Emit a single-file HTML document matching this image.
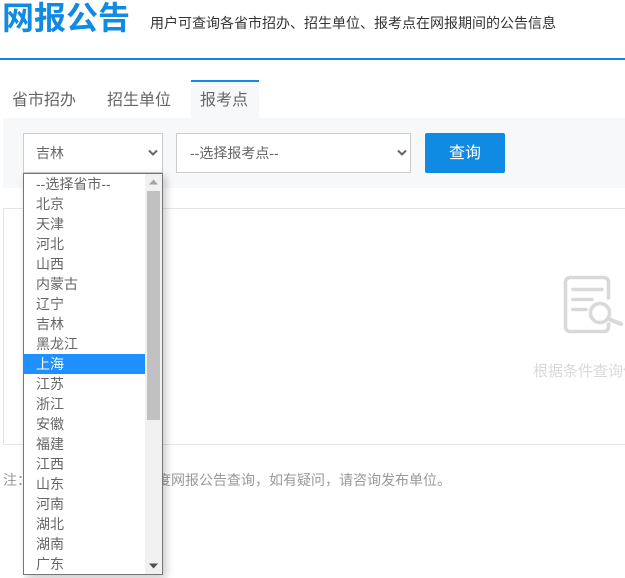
<!DOCTYPE html>
<html lang="zh">
<head>
<meta charset="utf-8">
<title>网报公告</title>
<style>
html,body{margin:0;padding:0;background:#fff}
body{width:625px;height:578px;position:relative;overflow:hidden;font-family:"Liberation Sans","Noto Sans CJK SC",sans-serif;color:#333}
.a{position:absolute;white-space:nowrap}
.sel{position:absolute;top:133px;height:38px;background:#fff;border:1px solid #ccc;font-size:14px;line-height:39px;color:#666;box-sizing:content-box}
.chev{position:absolute;top:15px}
#dd{position:absolute;left:23px;top:173px;width:138px;height:400px;border:1px solid #767676;background:#fff;box-shadow:3px 3px 8px rgba(0,0,0,.22);overflow:hidden}
#dd div.o{height:20px;line-height:20px;font-size:14px;color:#666;padding-left:12px;width:109px}
#dd div.h{background:#1e90ff;color:#fff}
#sb{position:absolute;left:121px;top:0;width:17px;height:400px;background:#f1f1f1}
#th{position:absolute;left:2px;top:17px;width:13px;height:229px;background:#c1c1c1}
</style>
</head>
<body>
<div class="a" style="left:2px;top:-5px;font-size:32px;line-height:46px;font-weight:bold;color:#108ae3">网报公告</div>
<div class="a" style="left:150px;top:13px;font-size:14px;line-height:20px;color:#333">用户可查询各省市招办、招生单位、报考点在网报期间的公告信息</div>
<div class="a" style="left:0;top:58px;width:625px;height:2px;background:#108ae3"></div>

<div class="a" style="left:12px;top:89px;font-size:16px;line-height:24px;color:#666">省市招办</div>
<div class="a" style="left:107px;top:89px;font-size:16px;line-height:24px;color:#666">招生单位</div>
<div class="a" style="left:191px;top:80px;width:68px;height:38px;background:#f7f8fa;border-top:2px solid #108ae3;box-sizing:border-box"></div>
<div class="a" style="left:200px;top:89px;font-size:16px;line-height:24px;color:#666">报考点</div>

<div class="a" style="left:3px;top:118px;width:622px;height:70px;background:#f7f8fa"></div>

<div class="sel" style="left:23px;width:138px"><span style="position:absolute;left:12px">吉林</span>
<svg class="chev" style="left:123px" width="12" height="8" viewBox="0 0 12 8"><path d="M2 1.500 6 5.500 10 1.500" fill="none" stroke="#666" stroke-width="2"/></svg></div>
<div class="sel" style="left:176px;width:233px"><span style="position:absolute;left:13px">--选择报考点--</span>
<svg class="chev" style="left:219px" width="12" height="8" viewBox="0 0 12 8"><path d="M2 1.500 6 5.500 10 1.500" fill="none" stroke="#666" stroke-width="2"/></svg></div>
<div class="a" style="left:425px;top:133px;width:80px;height:40px;background:#108ae3;border-radius:2px;color:#fff;font-size:16px;line-height:41px;text-align:center">查询</div>

<div class="a" style="left:3px;top:208px;width:640px;height:237px;border:1px solid #e5e5e5;box-sizing:border-box"></div>

<svg class="a" style="left:555px;top:270px" width="70" height="70" viewBox="0 0 70 70" fill="none" stroke="#d9d9d9" stroke-width="3.6" stroke-linecap="round">
<path d="M53.500 28V12a4.500 4.500 0 0 0-4.500-4.500H15A4.500 4.500 0 0 0 10.500 12v45a4.500 4.500 0 0 0 4.500 4.500H49a4.500 4.500 0 0 0 4.500-4.500v-3"/>
<path d="M18 19.500H47M18 29.500H37M18 39.500H31"/>
<circle cx="45" cy="43" r="9.500"/>
<path d="M55 49.500 66 54" stroke-width="4"/>
</svg>
<div class="a" style="left:533px;top:361px;font-size:15px;line-height:21px;color:#d9d9d9">根据条件查询信息</div>

<div class="a" style="left:3px;top:470px;font-size:14px;line-height:20px;color:#999">注：</div>
<div class="a" style="left:157px;top:470px;font-size:14px;line-height:20px;color:#999">度网报公告查询，如有疑问，请咨询发布单位。</div>

<div id="dd">
<div class="o">--选择省市--</div>
<div class="o">北京</div>
<div class="o">天津</div>
<div class="o">河北</div>
<div class="o">山西</div>
<div class="o">内蒙古</div>
<div class="o">辽宁</div>
<div class="o">吉林</div>
<div class="o">黑龙江</div>
<div class="o h">上海</div>
<div class="o">江苏</div>
<div class="o">浙江</div>
<div class="o">安徽</div>
<div class="o">福建</div>
<div class="o">江西</div>
<div class="o">山东</div>
<div class="o">河南</div>
<div class="o">湖北</div>
<div class="o">湖南</div>
<div class="o">广东</div>
<div id="sb">
<div id="th"></div>
<svg style="position:absolute;left:3px;top:5px" width="11" height="6" viewBox="0 0 11 6"><path d="M5.500 .5 10 5.500H1Z" fill="#a3a3a3"/></svg>
<svg style="position:absolute;left:3px;top:389px" width="11" height="6" viewBox="0 0 11 6"><path d="M1 .5H10L5.500 5.500Z" fill="#505050"/></svg>
</div>
</div>
</body>
</html>
